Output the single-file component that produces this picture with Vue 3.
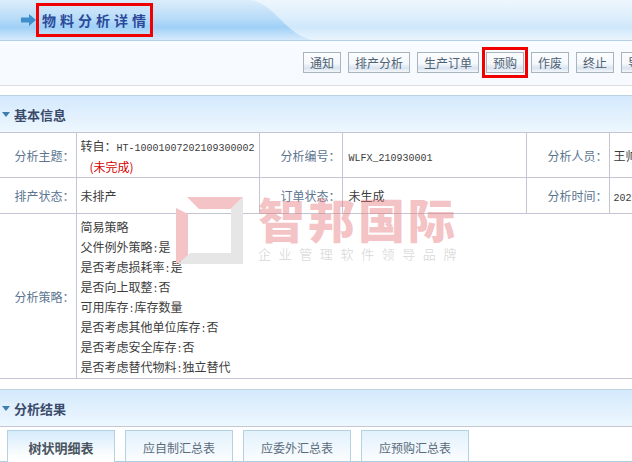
<script setup>
const buttons = [
  { label: '通知', w: 38 },
  { label: '排产分析', w: 62 },
  { label: '生产订单', w: 62 },
  { label: '预购', w: 38, marked: true },
  { label: '作废', w: 38 },
  { label: '终止', w: 38 },
  { label: '导出', w: 38 }
]
const strategy = [
  { label: '简易策略' },
  { label: '父件例外策略', value: '是' },
  { label: '是否考虑损耗率', value: '是' },
  { label: '是否向上取整', value: '否' },
  { label: '可用库存', value: '库存数量' },
  { label: '是否考虑其他单位库存', value: '否' },
  { label: '是否考虑安全库存', value: '否' },
  { label: '是否考虑替代物料', value: '独立替代' }
]
const tabs = ['树状明细表', '应自制汇总表', '应委外汇总表', '应预购汇总表']
</script>

<template>
  <div class="page">
    <header class="top">
      <svg class="curve" width="632" height="40" viewBox="0 0 632 40">
        <path d="M250 0 C276 4 284 34 312 40 L632 40 L632 0 Z" fill="#fff" fill-opacity="0.5" />
      </svg>
      <svg class="arrow" width="15" height="12" viewBox="0 0 15 12">
        <path d="M0 3.500H8V0L15 6L8 12V8.500H0Z" fill="#3f8fcf" />
      </svg>
      <h1 class="title">物料分析详情</h1>
    </header>

    <div class="toolbar">
      <button
        v-for="b in buttons"
        :key="b.label"
        class="btn"
        :class="{ marked: b.marked }"
        :style="{ width: b.w + 'px' }"
      >{{ b.label }}</button>
    </div>

    <div class="section first">
      <span class="tri"></span>
      <span>基本信息</span>
    </div>

    <table class="info">
      <colgroup>
        <col style="width: 76px" />
        <col style="width: 183px" />
        <col style="width: 83px" />
        <col style="width: 184px" />
        <col style="width: 83px" />
        <col style="width: 100px" />
      </colgroup>
      <tbody>
        <tr class="r1">
          <th>分析主题&#xFF1A;</th>
          <td class="from">
            <div class="nowrap">转自&#xFF1A;<span class="mono">HT-10001007202109300002</span></div>
            <div class="red">(未完成)</div>
          </td>
          <th>分析编号&#xFF1A;</th>
          <td class="wide"><span class="mono">WLFX_210930001</span></td>
          <th>分析人员&#xFF1A;</th>
          <td class="clip">王帅</td>
        </tr>
        <tr class="r2">
          <th>排产状态&#xFF1A;</th>
          <td>未排产</td>
          <th>订单状态&#xFF1A;</th>
          <td class="wide">未生成</td>
          <th>分析时间&#xFF1A;</th>
          <td class="clip"><span class="mono">2021-09-30</span></td>
        </tr>
        <tr class="r3">
          <th>分析策略&#xFF1A;</th>
          <td colspan="5" class="strategy">
            <div v-for="s in strategy" :key="s.label" class="line">
              {{ s.label }}<template v-if="s.value"><span class="mono">:</span>{{ s.value }}</template>
            </div>
          </td>
        </tr>
      </tbody>
    </table>

    <div class="section second">
      <span class="tri"></span>
      <span>分析结果</span>
    </div>

    <div class="tabs">
      <div v-for="(t, i) in tabs" :key="t" class="tab" :class="{ active: i === 0 }">{{ t }}</div>
    </div>

    <div class="watermark">
      <svg class="wm-logo" width="68" height="68" viewBox="0 0 68 68">
        <path d="M11 0H67L55 12H23Z" fill="#f3c3c6" />
        <path d="M0 11L12 17V60L0 67Z" fill="#f3c3c6" />
        <path d="M67 0V67H2L14 56H55V12Z" fill="#e6e6e6" />
      </svg>
      <div class="wm-text">
        <div class="wm-name">智邦国际</div>
        <div class="wm-sub">企业管理软件领导品牌</div>
      </div>
    </div>
  </div>
</template>

<style scoped>
.page {
  position: relative;
  width: 632px;
  height: 462px;
  overflow: hidden;
  background: #fff;
  font-family: "Noto Sans CJK SC", "Liberation Sans", sans-serif;
  font-size: 12px;
  color: #3c3c3c;
}
.top {
  position: relative;
  height: 40px;
  display: flex;
  align-items: center;
  padding-left: 21px;
  box-sizing: content-box;
  border-bottom: 1px solid #b5d0e4;
  background: linear-gradient(#dcedfb 0%, #b9dcf8 45%, #9fd0f7 68%, #d6eafb 100%);
}
.curve {
  position: absolute;
  left: 0;
  top: 0;
}
.arrow {
  position: relative;
  flex: none;
}
.title {
  position: relative;
  margin: 0;
  width: 117px;
  height: 34px;
  line-height: 28px;
  box-sizing: border-box;
  border: 3px solid #f00000;
  padding-left: 3px;
  font-size: 14px;
  font-weight: 700;
  letter-spacing: 4px;
  white-space: nowrap;
  color: #2b4a9a;
}
.toolbar {
  height: 45px;
  box-sizing: border-box;
  display: flex;
  gap: 7px;
  padding: 11px 0 0 303px;
  border-bottom: 1px solid #dcdcdc;
  background: linear-gradient(#f8fbff, #f6faff);
}
.btn {
  position: relative;
  flex: none;
  height: 21px;
  padding: 0;
  border: 1px solid #aab4bd;
  background: linear-gradient(#fbfcfe 0%, #f5f8fc 55%, #d9e3ef 80%, #f4f7fb 100%);
  font: inherit;
  line-height: 19px;
  color: #4e6272;
  white-space: nowrap;
  overflow: hidden;
}
.btn.marked {
  overflow: visible;
}
.btn.marked::after {
  content: "";
  position: absolute;
  left: -5px;
  top: -6px;
  width: 46px;
  height: 31px;
  box-sizing: border-box;
  border: 3px solid #f00000;
}
.section {
  height: 38px;
  box-sizing: border-box;
  display: flex;
  align-items: center;
  padding-left: 2px;
  gap: 4px;
  border-top: 1px solid #bcd3e4;
  background: linear-gradient(#d3e9fc, #eef7fe);
  font-size: 13px;
  font-weight: 700;
  color: #3a4a6b;
}
.first {
  margin-top: 9px;
  border-bottom: 1px solid #c3c8d2;
}
.second {
  margin-top: 10px;
  border-bottom: 1px solid #c3c8d2;
}
.tri {
  width: 0;
  height: 0;
  border-left: 4px solid transparent;
  border-right: 4px solid transparent;
  border-top: 5px solid #3d7fae;
}
.info {
  table-layout: fixed;
  width: 709px;
  border-collapse: collapse;
  margin-top: -1px;
  border-bottom: 1px solid #c8c8d0;
}
.info th,
.info td {
  padding: 0 4px;
  border: 1px solid #c3c6d2;
  font-weight: 400;
  text-align: left;
}
.info tr > :first-child {
  border-left: none;
}
.info th {
  text-align: right;
  padding: 0 1px 0 0;
  color: #5b7590;
  white-space: nowrap;
}
.info .r1 {
  height: 45px;
}
.info .r2 {
  height: 36px;
}
.info .r3 {
  height: 165px;
}
.info .wide {
  padding-left: 6px;
}
.info .from {
  padding-top: 1px;
  line-height: 21px;
}
.nowrap {
  white-space: nowrap;
}
.red {
  color: #d40000;
  padding-left: 9px;
}
.mono {
  font-family: "Liberation Mono", monospace;
  font-size: 10px;
  line-height: 0;
}
.clip {
  overflow: hidden;
  white-space: nowrap;
}
.info .strategy {
  vertical-align: middle;
  padding-top: 2px;
}
.line {
  height: 20px;
  line-height: 20px;
}
.tabs {
  display: flex;
  gap: 10px;
  height: 35px;
  box-sizing: border-box;
  padding: 3px 0 0 7px;
  border-bottom: 1px solid #a9d0e2;
}
.tab {
  width: 108px;
  height: 31px;
  box-sizing: border-box;
  border: 1px solid #b3d3e2;
  border-bottom: none;
  text-align: center;
  line-height: 33px;
  color: #5b6b7a;
  background: linear-gradient(#e2f1fc, #fbfdff);
}
.tab.active {
  height: 32px;
  background: linear-gradient(#d6ebfb, #fff 85%);
  font-size: 13px;
  font-weight: 700;
  color: #4a5560;
}
.watermark {
  position: absolute;
  left: 176px;
  top: 197px;
  display: flex;
  gap: 14px;
  pointer-events: none;
}
.wm-logo {
  flex: none;
}
.wm-name {
  margin-top: -3px;
  font-size: 47px;
  line-height: 47px;
  font-weight: 900;
  letter-spacing: 3px;
  white-space: nowrap;
  color: rgba(232, 120, 125, 0.45);
}
.wm-sub {
  margin-top: 6px;
  font-size: 13px;
  line-height: 14px;
  letter-spacing: 7.600px;
  white-space: nowrap;
  color: rgba(180, 180, 180, 0.45);
}
</style>
